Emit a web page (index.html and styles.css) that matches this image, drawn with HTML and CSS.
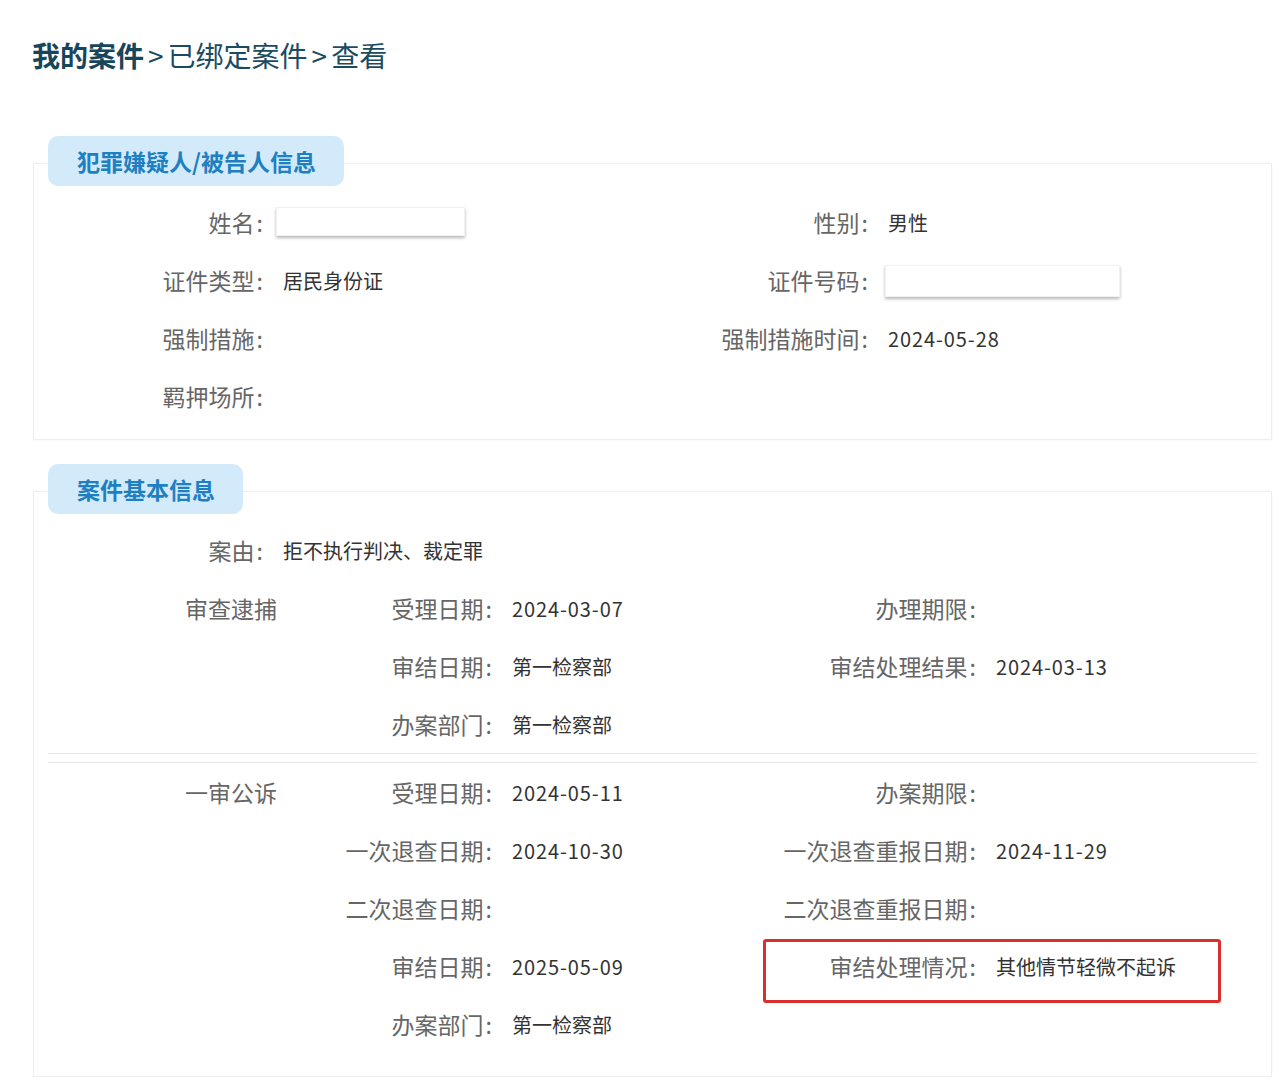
FILE: index.html
```html
<!DOCTYPE html>
<html lang="zh-CN">
<head>
<meta charset="utf-8">
<title>查看</title>
<link rel="stylesheet" href="styles.css">
</head>
<body>
<div class="page">
  <div class="crumb"><b>我的案件</b><span class="gt">&gt;</span>已绑定案件<span class="gt">&gt;</span>查看</div>

  <section class="sec sec1">
    <div class="tab">犯罪嫌疑人/被告人信息</div>
    <div class="box">
      <div class="grid4">
        <div class="lbl">姓名<i>:</i></div>
        <div class="val"><div class="input in1"></div></div>
        <div class="lbl">性别<i>:</i></div>
        <div class="val">男性</div>

        <div class="lbl">证件类型<i>:</i></div>
        <div class="val">居民身份证</div>
        <div class="lbl">证件号码<i>:</i></div>
        <div class="val"><div class="input in2"></div></div>

        <div class="lbl">强制措施<i>:</i></div>
        <div class="val"></div>
        <div class="lbl">强制措施时间<i>:</i></div>
        <div class="val num">2024-05-28</div>

        <div class="lbl">羁押场所<i>:</i></div>
        <div class="val"></div>
        <div class="lbl"></div>
        <div class="val"></div>
      </div>
    </div>
  </section>

  <section class="sec sec2">
    <div class="tab">案件基本信息</div>
    <div class="box box2">
      <div class="grid4">
        <div class="lbl">案由<i>:</i></div>
        <div class="val">拒不执行判决、裁定罪</div>
      </div>

      <div class="stage stage1">
        <div class="stg">审查逮捕</div>
        <div class="lbl">受理日期<i>:</i></div>
        <div class="val num">2024-03-07</div>
        <div class="lbl">办理期限<i>:</i></div>
        <div class="val"></div>

        <div class="stg"></div>
        <div class="lbl">审结日期<i>:</i></div>
        <div class="val">第一检察部</div>
        <div class="lbl">审结处理结果<i>:</i></div>
        <div class="val num">2024-03-13</div>

        <div class="stg"></div>
        <div class="lbl">办案部门<i>:</i></div>
        <div class="val">第一检察部</div>
        <div class="lbl"></div>
        <div class="val"></div>
      </div>

      <div class="stage stage2">
        <div class="stg">一审公诉</div>
        <div class="lbl">受理日期<i>:</i></div>
        <div class="val num">2024-05-11</div>
        <div class="lbl">办案期限<i>:</i></div>
        <div class="val"></div>

        <div class="stg"></div>
        <div class="lbl">一次退查日期<i>:</i></div>
        <div class="val num">2024-10-30</div>
        <div class="lbl">一次退查重报日期<i>:</i></div>
        <div class="val num">2024-11-29</div>

        <div class="stg"></div>
        <div class="lbl">二次退查日期<i>:</i></div>
        <div class="val"></div>
        <div class="lbl">二次退查重报日期<i>:</i></div>
        <div class="val"></div>

        <div class="stg"></div>
        <div class="lbl">审结日期<i>:</i></div>
        <div class="val num">2025-05-09</div>
        <div class="lbl">审结处理情况<i>:</i></div>
        <div class="val">其他情节轻微不起诉</div>

        <div class="stg"></div>
        <div class="lbl">办案部门<i>:</i></div>
        <div class="val">第一检察部</div>
        <div class="lbl"></div>
        <div class="val"></div>

        <div class="mark"></div>
      </div>
    </div>
  </section>
</div>
</body>
</html>
```

FILE: styles.css
```css
* { box-sizing: border-box; }
html, body { margin: 0; padding: 0; background: #ffffff; }
body {
  font-family: "Noto Sans CJK SC", "Noto Sans", sans-serif;
  color: #333;
}
.page {
  width: 1280px;
  padding: 35px 8px 0 33px;
}
.crumb {
  font-size: 28px;
  line-height: 40px;
  color: #1c4b60;
  margin-left: -1px;
}
.crumb b { font-weight: 700; color: #17465b; }
.crumb .gt { margin: 0 4px; }

.sec1 { margin-top: 61px; }
.sec2 { margin-top: 24px; }

.tab {
  position: relative;
  z-index: 2;
  display: inline-block;
  margin-left: 15px;
  height: 50px;
  line-height: 50px;
  padding: 0 28px 0 29px;
  background: #d3eafa;
  border-radius: 10px;
  color: #1e7fc2;
  font-size: 23px;
  font-weight: 700;
}
.box {
  position: relative;
  z-index: 1;
  margin-top: -23px;
  border: 1px solid #eeeeee;
  box-shadow: 0 0 3px rgba(0,0,0,0.04);
  background: #fff;
  padding: 29px 0 14px;
}
.box2 { padding: 29px 14px 23px 0; }

.grid4 {
  display: grid;
  grid-template-columns: 229px 335px 270px 1fr;
  grid-auto-rows: 58px;
  align-items: center;
}
.lbl {
  text-align: right;
  font-size: 23px;
  color: #666;
  white-space: nowrap;
}
.lbl i { font-style: normal; margin-left: 2px; }
.val {
  padding-left: 20px;
  font-size: 20px;
  color: #333;
  white-space: nowrap;
}
.num { letter-spacing: 0.9px; }
.input {
  background: #fff;
  border: 1px solid #f1f1f1;
  box-shadow: 0 2px 3px rgba(0,0,0,0.28);
}
.in1 { width: 189px; height: 29px; margin-left: -7px; margin-top: -2px; }
.in2 { width: 235px; height: 32px; margin-left: -3px; margin-top: 2px; }

.stage {
  position: relative;
  margin-left: 14px;
  display: grid;
  grid-template-columns: 229px 215px 220px 264px 1fr;
  grid-auto-rows: 58px;
  align-items: center;
}
.stage1 { border-bottom: 1px solid #e6e6e6; }
.stage2 { border-top: 1px solid #e6e6e6; margin-top: 8px; }
.stg {
  text-align: right;
  font-size: 23px;
  color: #666;
}
.mark {
  position: absolute;
  left: 715px;
  top: 176px;
  width: 458px;
  height: 64px;
  border: 3px solid #d8302a;
  border-radius: 3px;
}
```
